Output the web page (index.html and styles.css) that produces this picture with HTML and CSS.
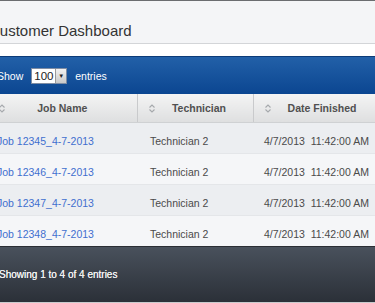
FILE: index.html
```html
<!DOCTYPE html>
<html lang="en">
<head>
    <meta charset="UTF-8">
    <meta name="viewport" content="width=device-width, initial-scale=1.0">
    <title>Customer Dashboard</title>
    <link rel="stylesheet" href="styles.css">
</head>
<body>
    <div class="page">
        <div class="title-bar">Customer Dashboard</div>

        <div class="table-wrap">
            <!-- Length selector -->
            <div class="toolbar">
                <span>Show</span>
                <div class="select-box">
                    <span class="select-value">100</span>
                    <span class="select-btn">▼</span>
                </div>
                <span>entries</span>
            </div>

            <table class="jobs">
                <colgroup>
                    <col class="col-job">
                    <col class="col-tech">
                    <col class="col-date">
                </colgroup>
                <thead>
                    <tr>
                        <th><span class="sort"><svg width="6" height="9" viewBox="0 0 6 9"><path d="M0.5 3.5 L3 1 L5.5 3.5 M0.5 5.5 L3 8 L5.5 5.5" fill="none" stroke="#a5a8ac" stroke-width="1.1"/></svg></span>Job Name</th>
                        <th class="th-tech"><span class="sort"><svg width="6" height="9" viewBox="0 0 6 9"><path d="M0.5 3.5 L3 1 L5.5 3.5 M0.5 5.5 L3 8 L5.5 5.5" fill="none" stroke="#a5a8ac" stroke-width="1.1"/></svg></span>Technician</th>
                        <th class="th-date"><span class="sort"><svg width="6" height="9" viewBox="0 0 6 9"><path d="M0.5 3.5 L3 1 L5.5 3.5 M0.5 5.5 L3 8 L5.5 5.5" fill="none" stroke="#a5a8ac" stroke-width="1.1"/></svg></span>Date Finished</th>
                    </tr>
                </thead>
                <tbody>
                    <tr class="odd">
                        <td class="td-job"><a href="#">Job 12345_4-7-2013</a></td>
                        <td class="td-tech">Technician 2</td>
                        <td class="td-date">4/7/2013&nbsp; 11:42:00 AM</td>
                    </tr>
                    <tr class="even">
                        <td class="td-job"><a href="#">Job 12346_4-7-2013</a></td>
                        <td class="td-tech">Technician 2</td>
                        <td class="td-date">4/7/2013&nbsp; 11:42:00 AM</td>
                    </tr>
                    <tr class="odd">
                        <td class="td-job"><a href="#">Job 12347_4-7-2013</a></td>
                        <td class="td-tech">Technician 2</td>
                        <td class="td-date">4/7/2013&nbsp; 11:42:00 AM</td>
                    </tr>
                    <tr class="even">
                        <td class="td-job"><a href="#">Job 12348_4-7-2013</a></td>
                        <td class="td-tech">Technician 2</td>
                        <td class="td-date">4/7/2013&nbsp; 11:42:00 AM</td>
                    </tr>
                </tbody>
            </table>

            <div class="footer">Showing 1 to 4 of 4 entries</div>
        </div>
    </div>
</body>
</html>
```

FILE: styles.css
```css
body { margin: 0; background-color: #ffffff; font-family: "Liberation Sans", Arial, sans-serif; overflow: hidden; }
.page { margin-left: -12px; width: 403px; border-top: 1px solid #6b6d70; }

.title-bar {
    background-color: #f4f5f7;
    color: #333333;
    font-size: 15px;
    line-height: 15px;
    padding: 22px 0 5px 1px;
    border-bottom: 1px solid #d3d5d8;
}

.table-wrap { margin-top: 12px; }

/* Blue toolbar */
.toolbar {
    display: flex;
    align-items: center;
    gap: 8px;
    height: 37px;
    padding-left: 9px;
    background: linear-gradient(#2260a8, #0b4691);
    border-top: 1px solid #0c3b78;
    color: #ffffff;
    font-size: 10.5px;
}

.select-box {
    display: flex;
    height: 14px;
    width: 34px;
    background-color: #ffffff;
    border: 1px solid #7f8da3;
    color: #222222;
    font-size: 11.5px;
    line-height: 14px;
}

.select-value { flex: 1; padding-left: 2px; }

.select-btn {
    width: 10px;
    background: linear-gradient(#f2f2f2, #c9c9c9);
    border-left: 1px solid #9a9a9a;
    font-size: 6px;
    text-align: center;
    color: #222;
}

/* Table */
.jobs { border-collapse: collapse; table-layout: fixed; width: 403px; font-size: 10.5px; }
.col-job { width: 149px; }
.col-tech { width: 116px; }
.col-date { width: 138px; }

.jobs th {
    position: relative;
    height: 28px;
    padding: 0;
    background: linear-gradient(#f4f4f4, #dedfe0);
    border-right: 1px solid #c9cacc;
    border-bottom: 1px solid #cfd1d3;
    color: #505050;
    font-weight: bold;
    text-align: center;
}

.jobs th.th-tech { text-indent: 8px; }
.jobs th.th-date { text-indent: 0; }

.sort { position: absolute; left: 11px; top: 10px; line-height: 0; text-indent: 0; }

.jobs td {
    height: 25px;
    padding: 5px 0 0 0;
    color: #4a4a4a;
    border-bottom: 1px solid #e4e6e9;
    white-space: nowrap;
}

.jobs td.td-job { padding-left: 9px; }
.jobs td.td-tech { padding-left: 13px; }
.jobs td.td-date { padding-left: 11px; }

.jobs tr.odd td { background-color: #eceef1; }
.jobs tr.even td { background-color: #f5f6f8; }
.jobs tr:last-child td { border-bottom: none; }

.jobs a { color: #3f6fcf; text-decoration: none; }

/* Dark footer */
.footer {
    height: 55px;
    line-height: 55px;
    padding-left: 11px;
    background: linear-gradient(#49515c, #2b3038);
    border-top: 1px solid #2a2e34;
    border-bottom: 1px solid #c9cbcd;
    color: #eeeeee;
    font-size: 10px;
    text-shadow: 0 0 0.4px #ffffff;
}
```
